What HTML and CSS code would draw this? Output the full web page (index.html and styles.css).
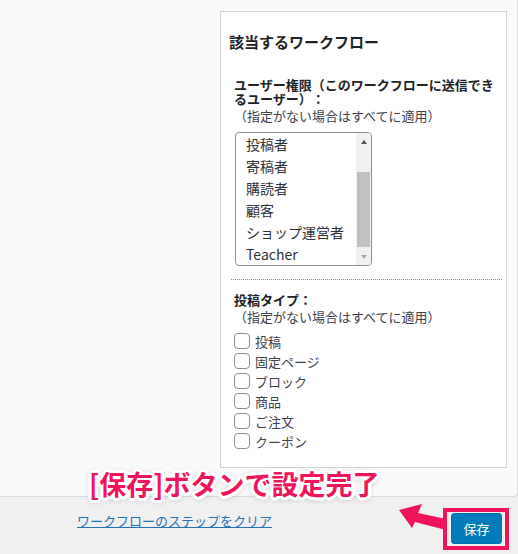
FILE: index.html
```html
<!DOCTYPE html>
<html lang="ja">
<head>
<meta charset="utf-8">
<title>ワークフロー設定</title>
<link rel="stylesheet" href="styles.css">
</head>
<body>
<div class="page">
  <div class="modal">
    <div class="panel">
      <h3 class="panel-title">該当するワークフロー</h3>
      <div class="section">
        <div class="label">ユーザー権限（このワークフローに送信できるユーザー）：</div>
        <div class="note">（指定がない場合はすべてに適用）</div>
        <div class="listbox">
          <div class="options">
            <div class="option">投稿者</div>
            <div class="option">寄稿者</div>
            <div class="option">購読者</div>
            <div class="option">顧客</div>
            <div class="option">ショップ運営者</div>
            <div class="option">Teacher</div>
          </div>
          <div class="scrollbar">
            <div class="sb-btn"><span class="tri-up"></span></div>
            <div class="sb-track"><div class="sb-thumb"></div></div>
            <div class="sb-btn"><span class="tri-down"></span></div>
          </div>
        </div>
      </div>
      <div class="sep"></div>
      <div class="section">
        <div class="label">投稿タイプ：</div>
        <div class="note">（指定がない場合はすべてに適用）</div>
        <ul class="checks">
          <li class="check"><span class="box"></span>投稿</li>
          <li class="check"><span class="box"></span>固定ページ</li>
          <li class="check"><span class="box"></span>ブロック</li>
          <li class="check"><span class="box"></span>商品</li>
          <li class="check"><span class="box"></span>ご注文</li>
          <li class="check"><span class="box"></span>クーポン</li>
        </ul>
      </div>
    </div>
  </div>
  <div class="footer">
    <a class="clear-link" href="#">ワークフローのステップをクリア</a>
    <button class="save-btn" type="button">保存</button>
  </div>

  <div class="callout">[保存]ボタンで設定完了</div>
  <div class="highlight"></div>
  <svg class="arrow" width="54" height="34" viewBox="0 0 54 34">
    <polygon points="4,10 27,4 23,13 51,19 51,30 20,22 17,28" fill="#f0145a"/>
  </svg>
</div>
</body>
</html>
```

FILE: styles.css
```css
html, body {
  margin: 0;
  padding: 0;
}
body {
  background: #f0f0f1;
  font-family: "Noto Sans CJK JP", "Noto Sans", sans-serif;
  color: #3c434a;
  text-spacing-trim: space-all;
}
.page {
  position: relative;
  width: 518px;
  height: 554px;
  overflow: hidden;
}
.modal {
  box-sizing: border-box;
  width: 518px;
  height: 497px;
  background: #fafafa;
  border-right: 1px solid #dcdcde;
  border-bottom: 1px solid #dcdcde;
  border-bottom-right-radius: 4px;
  display: flex;
  justify-content: flex-end;
  align-items: flex-start;
  padding: 11px 10px 0 0;
}
.panel {
  box-sizing: border-box;
  width: 287px;
  background: #fff;
  border: 1px solid #cfd2d6;
  padding: 20px 4px 16px 8px;
}
.panel-title {
  margin: 0;
  font-size: 15px;
  line-height: 20px;
  font-weight: 700;
  color: #1d2327;
}
.section {
  padding-left: 5px;
}
.panel-title + .section {
  margin-top: 26px;
}
.label {
  font-size: 13px;
  line-height: 14px;
  font-weight: 700;
  color: #1d2327;
}
.note {
  font-size: 13px;
  line-height: 18px;
  margin-top: 1px;
  color: #3c434a;
}
.listbox {
  box-sizing: border-box;
  margin: 7px 0 0 1px;
  width: 137px;
  height: 134px;
  border: 1px solid #8c8f94;
  border-radius: 4px;
  display: flex;
  overflow: hidden;
  background: #fff;
}
.options {
  flex: 1;
  padding-left: 10px;
}
.option {
  font-size: 14px;
  line-height: 22px;
  color: #2c3338;
  white-space: nowrap;
}
.scrollbar {
  width: 15px;
  background: #f1f1f1;
  display: flex;
  flex-direction: column;
}
.sb-btn {
  height: 17px;
  display: flex;
  align-items: center;
  justify-content: center;
}
.tri-up {
  width: 0;
  height: 0;
  border-left: 3.5px solid transparent;
  border-right: 3.5px solid transparent;
  border-bottom: 4px solid #505050;
}
.tri-down {
  width: 0;
  height: 0;
  border-left: 3.5px solid transparent;
  border-right: 3.5px solid transparent;
  border-top: 4px solid #a3a3a3;
}
.sb-track {
  flex: 1;
  display: flex;
  flex-direction: column;
  justify-content: flex-end;
  padding: 0 1px 1px;
}
.sb-thumb {
  height: 75px;
  background: #c1c1c1;
}
.sep {
  margin: 13px 0 0 2px;
  border-top: 1px dotted #8c8f94;
}
.sep + .section {
  margin-top: 13px;
}
.checks {
  list-style: none;
  margin: 5px 0 0;
  padding: 0;
}
.check {
  height: 20px;
  display: flex;
  align-items: center;
  font-size: 13px;
  color: #3c434a;
}
.box {
  box-sizing: border-box;
  width: 16px;
  height: 16px;
  border: 1px solid #8c8f94;
  border-radius: 4px;
  background: #fff;
  margin-right: 5px;
  flex: none;
}
.footer {
  display: flex;
  justify-content: space-between;
  align-items: flex-start;
  padding: 15px 16px 0 77px;
}
.clear-link {
  font-size: 13px;
  line-height: 18px;
  color: #2271b1;
  text-decoration: underline;
}
.save-btn {
  margin-top: 1px;
  box-sizing: border-box;
  width: 51px;
  height: 31px;
  background: #007cba;
  border: 1px solid #0073aa;
  border-radius: 3px;
  color: #fff;
  font-family: "Noto Sans CJK JP", "Noto Sans", sans-serif;
  font-size: 13px;
  padding: 0;
}
.callout {
  position: absolute;
  left: 89px;
  top: 469px;
  font-size: 27px;
  line-height: 30px;
  font-weight: 700;
  color: #f0145a;
  white-space: nowrap;
  text-shadow:
    3px 0 #fff, -3px 0 #fff, 0 3px #fff, 0 -3px #fff,
    2px 2px #fff, -2px -2px #fff, 2px -2px #fff, -2px 2px #fff,
    3px 1px #fff, -3px 1px #fff, 3px -1px #fff, -3px -1px #fff,
    1px 3px #fff, -1px 3px #fff, 1px -3px #fff, -1px -3px #fff,
    0 1px 7px rgba(0, 0, 0, 0.45);
}
.highlight {
  position: absolute;
  left: 443px;
  top: 508px;
  width: 66px;
  height: 42px;
  box-sizing: border-box;
  border: 4px solid #f0145a;
}
.arrow {
  position: absolute;
  left: 395px;
  top: 500px;
}
```
